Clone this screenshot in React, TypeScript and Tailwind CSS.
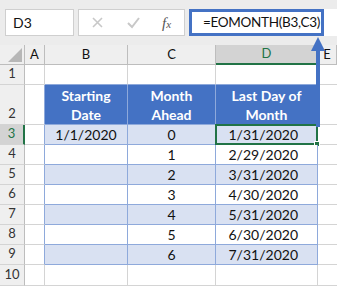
import React from "react";

const GRID = "border-[#d4d4d4]";
const TBL = "border-[#8ea9db]";

const cols = [
  { key: "A", w: "w-[20px]" },
  { key: "B", w: "w-[83px]" },
  { key: "C", w: "w-[88px]" },
  { key: "D", w: "w-[102px]" },
  { key: "E", w: "flex-1" },
];

const body = [
  ["1/1/2020", "0", "1/31/2020"],
  ["", "1", "2/29/2020"],
  ["", "2", "3/31/2020"],
  ["", "3", "4/30/2020"],
  ["", "4", "5/31/2020"],
  ["", "5", "6/30/2020"],
  ["", "6", "7/31/2020"],
];

function RowHead({ n, h = "h-[20px]", active = false }: { n: string; h?: string; active?: boolean }) {
  return (
    <div
      className={`w-[25px] shrink-0 ${h} flex items-end justify-center pb-[1px] border-b border-[#d4d4d4] text-[13px] ${
        active
          ? "bg-[#d3d3d3] border-r-2 border-r-[#217346] text-[#217346]"
          : "bg-[#efefef] border-r border-r-[#bdbdbd] text-[#333]"
      }`}
    >
      {n}
    </div>
  );
}

export default function App() {
  return (
    <div
      className="relative w-[337px] h-[286px] overflow-hidden bg-white text-[#111]"
      style={{ fontFamily: "Lato, 'Liberation Sans', sans-serif" }}
    >
      {/* formula bar */}
      <div className="h-[45px] bg-[#ececec] flex items-start pt-[9px] pl-[5px]">
        <div className="w-[69px] h-[27px] shrink-0 bg-white border border-[#cfcfcf] flex items-center pl-[7px] text-[14px]">
          D3
        </div>
        <div className="w-[4px] shrink-0" />
        <div className="w-[107px] h-[27px] shrink-0 bg-white border border-[#cfcfcf] flex items-center">
          <svg width="105" height="25" viewBox="0 0 105 25">
            <path d="M14 8 L23 17 M23 8 L14 17" stroke="#c8c8c8" strokeWidth="1.6" fill="none" />
            <path d="M49 13 L53 17 L60 8" stroke="#c8c8c8" strokeWidth="2" fill="none" />
            <text x="83" y="18" fontFamily="'Liberation Serif', serif" fontStyle="italic" fontSize="15" fill="#555">
              f<tspan fontSize="11">x</tspan>
            </text>
          </svg>
        </div>
        <div className="w-[4px] shrink-0" />
        <div className="flex-1 h-[27px] bg-white flex">
          <div className="w-[135px] h-[27px] shrink-0 border-[3px] border-[#4472c4] flex items-center pl-[11px] text-[13.5px] tracking-[-0.3px] whitespace-nowrap overflow-hidden text-[#111]">
            =EOMONTH(B3,C3)
          </div>
        </div>
      </div>

      {/* column headers */}
      <div className="flex h-[20px] bg-[#efefef]">
        <div className="w-[25px] shrink-0 border-r border-b border-[#bdbdbd] flex items-end justify-end p-[2px]">
          <svg width="14" height="14" viewBox="0 0 14 14">
            <path d="M14 0 L14 14 L0 14 Z" fill="#b7b7b7" />
          </svg>
        </div>
        {cols.map((c) => (
          <div
            key={c.key}
            className={`${c.w} shrink-0 flex items-center justify-center text-[13px] ${
              c.key === "D"
                ? "bg-[#d3d3d3] border-b-2 border-b-[#217346] border-r border-r-[#bdbdbd] text-[#217346]"
                : "border-r border-b border-[#bdbdbd]"
            }`}
          >
            {c.key}
          </div>
        ))}
      </div>

      {/* row 1 */}
      <div className="flex h-[20px]">
        <RowHead n="1" />
        <div className={`w-[20px] border-r border-b ${GRID}`} />
        <div className={`w-[83px] border-r ${GRID} border-b border-b-[#8ea9db]`} />
        <div className={`w-[88px] border-r ${GRID} border-b border-b-[#8ea9db]`} />
        <div className={`w-[102px] border-r ${GRID} border-b border-b-[#8ea9db]`} />
        <div className={`flex-1 border-b ${GRID}`} />
      </div>

      {/* row 2: table header */}
      <div className="flex h-[40px]">
        <RowHead n="2" h="h-[40px]" />
        <div className={`w-[20px] border-b ${GRID} border-r border-r-[#8ea9db]`} />
        {[
          ["Starting", "Date", "w-[83px]"],
          ["Month", "Ahead", "w-[88px]"],
          ["Last Day of", "Month", "w-[102px]"],
        ].map(([a, b, w]) => (
          <div
            key={a}
            className={`${w} bg-[#4472c4] border-r border-b ${TBL} flex flex-col items-center justify-center leading-[19px] text-white font-bold text-[14px]`}
          >
            <span>{a}</span>
            <span>{b}</span>
          </div>
        ))}
        <div className={`flex-1 border-b ${GRID}`} />
      </div>

      {/* rows 3-9 */}
      {body.map((r, i) => {
        const bg = i % 2 === 0 ? "bg-[#d9e1f2]" : "bg-white";
        return (
          <div key={i} className="flex h-[20px]">
            <RowHead n={String(i + 3)} active={i === 0} />
            <div className={`w-[20px] border-b ${GRID} border-r border-r-[#8ea9db]`} />
            <div className={`w-[83px] ${bg} border-r border-b ${TBL} flex items-center justify-center text-[14px]`}>
              {r[0]}
            </div>
            <div className={`w-[88px] ${bg} border-r border-b ${TBL} flex items-center justify-center text-[14px]`}>
              {r[1]}
            </div>
            <div className={`relative w-[102px] ${bg} border-r border-b ${TBL} flex items-center justify-end pr-[19px] text-[14px]`}>
              {r[2]}
              {i === 0 && (
                <div className="absolute -left-[1px] -top-[1px] -right-[1px] -bottom-[1px] border-2 border-[#217346]">
                  <div className="absolute -right-[4px] -bottom-[4px] w-[6px] h-[6px] bg-[#217346] border border-white" />
                </div>
              )}
            </div>
            <div className={`flex-1 border-b ${GRID}`} />
          </div>
        );
      })}

      {/* row 10 */}
      <div className="flex h-[21px]">
        <RowHead n="10" h="h-[21px]" />
        <div className={`w-[20px] border-r border-b ${GRID}`} />
        <div className={`w-[83px] border-r border-b ${GRID}`} />
        <div className={`w-[88px] border-r border-b ${GRID}`} />
        <div className={`w-[102px] border-r border-b ${GRID}`} />
        <div className={`flex-1 border-b ${GRID}`} />
      </div>

      {/* callout arrow */}
      <svg className="absolute left-[308px] top-[37px]" width="20" height="92" viewBox="0 0 20 92">
        <path d="M10 0 L17 14 L3 14 Z" fill="#4472c4" />
        <rect x="8" y="12" width="4" height="78" fill="#4472c4" />
      </svg>
    </div>
  );
}
